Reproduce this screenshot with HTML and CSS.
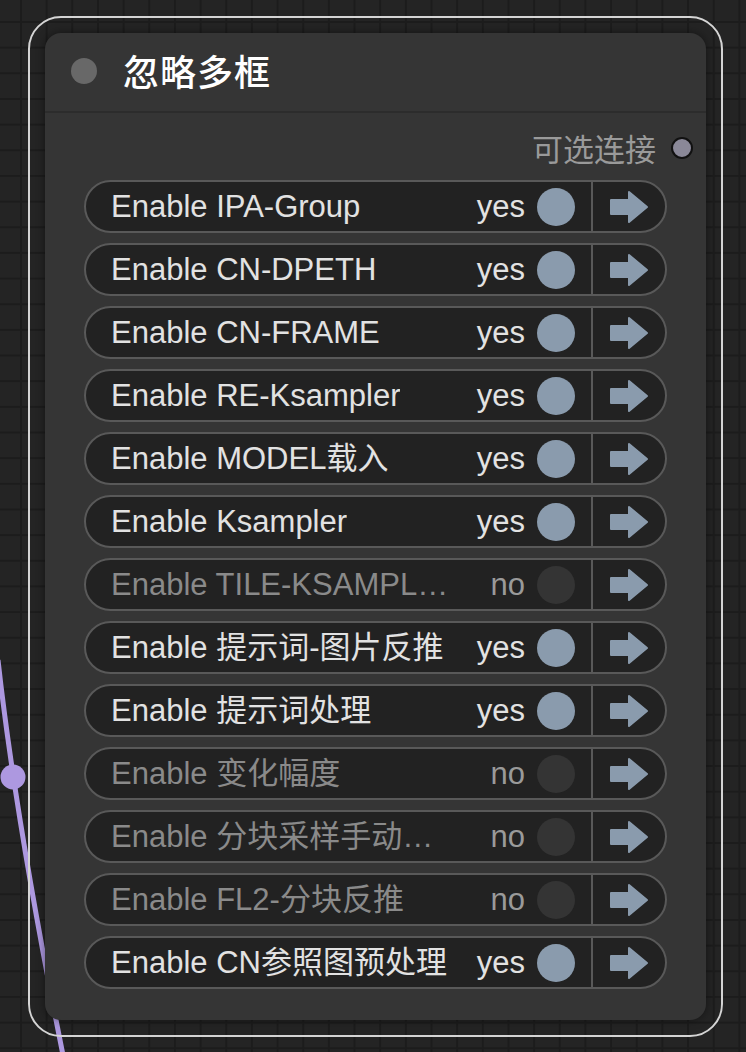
FILE: index.html
```html
<!DOCTYPE html>
<html lang="zh">
<head>
    <meta charset="UTF-8">
    <meta name="viewport" content="width=device-width, initial-scale=1.0">
    <title>忽略多框</title>
    <link rel="stylesheet" href="styles.css">
</head>
<body>
    <div class="canvas">
        <svg class="link" width="746" height="1052" viewBox="0 0 746 1052">
            <path d="M -2 660 Q 16 822 64 1060" fill="none" stroke="#ad98e0" stroke-width="5"/>
            <circle cx="13" cy="777" r="12.5" fill="#ad98e0"/>
        </svg>

        <div class="node">
            <div class="node-title">
                <span class="title-dot"></span>
                <span class="title-text">忽略多框</span>
            </div>

            <div class="node-body">
                <div class="slot-row">
                    <span class="slot-label">可选连接</span>
                    <span class="slot-dot"></span>
                </div>

                <div class="toggle-row">
                    <div class="toggle-main"><span class="label">Enable IPA-Group</span><span class="value">yes</span><span class="knob"></span></div>
                    <div class="toggle-nav"><svg width="40" height="34" viewBox="0 0 40 34"><path d="M2 10 H20 V2 L38 17 L20 32 V24 H2 Z" fill="#8a9bad" stroke="#8a9bad" stroke-width="2" stroke-linejoin="round"/></svg></div>
                </div>
                <div class="toggle-row">
                    <div class="toggle-main"><span class="label">Enable CN-DPETH</span><span class="value">yes</span><span class="knob"></span></div>
                    <div class="toggle-nav"><svg width="40" height="34" viewBox="0 0 40 34"><path d="M2 10 H20 V2 L38 17 L20 32 V24 H2 Z" fill="#8a9bad" stroke="#8a9bad" stroke-width="2" stroke-linejoin="round"/></svg></div>
                </div>
                <div class="toggle-row">
                    <div class="toggle-main"><span class="label">Enable CN-FRAME</span><span class="value">yes</span><span class="knob"></span></div>
                    <div class="toggle-nav"><svg width="40" height="34" viewBox="0 0 40 34"><path d="M2 10 H20 V2 L38 17 L20 32 V24 H2 Z" fill="#8a9bad" stroke="#8a9bad" stroke-width="2" stroke-linejoin="round"/></svg></div>
                </div>
                <div class="toggle-row">
                    <div class="toggle-main"><span class="label">Enable RE-Ksampler</span><span class="value">yes</span><span class="knob"></span></div>
                    <div class="toggle-nav"><svg width="40" height="34" viewBox="0 0 40 34"><path d="M2 10 H20 V2 L38 17 L20 32 V24 H2 Z" fill="#8a9bad" stroke="#8a9bad" stroke-width="2" stroke-linejoin="round"/></svg></div>
                </div>
                <div class="toggle-row">
                    <div class="toggle-main"><span class="label">Enable MODEL载入</span><span class="value">yes</span><span class="knob"></span></div>
                    <div class="toggle-nav"><svg width="40" height="34" viewBox="0 0 40 34"><path d="M2 10 H20 V2 L38 17 L20 32 V24 H2 Z" fill="#8a9bad" stroke="#8a9bad" stroke-width="2" stroke-linejoin="round"/></svg></div>
                </div>
                <div class="toggle-row">
                    <div class="toggle-main"><span class="label">Enable Ksampler</span><span class="value">yes</span><span class="knob"></span></div>
                    <div class="toggle-nav"><svg width="40" height="34" viewBox="0 0 40 34"><path d="M2 10 H20 V2 L38 17 L20 32 V24 H2 Z" fill="#8a9bad" stroke="#8a9bad" stroke-width="2" stroke-linejoin="round"/></svg></div>
                </div>
                <div class="toggle-row off">
                    <div class="toggle-main"><span class="label">Enable TILE-KSAMPL…</span><span class="value">no</span><span class="knob"></span></div>
                    <div class="toggle-nav"><svg width="40" height="34" viewBox="0 0 40 34"><path d="M2 10 H20 V2 L38 17 L20 32 V24 H2 Z" fill="#8a9bad" stroke="#8a9bad" stroke-width="2" stroke-linejoin="round"/></svg></div>
                </div>
                <div class="toggle-row">
                    <div class="toggle-main"><span class="label">Enable 提示词-图片反推</span><span class="value">yes</span><span class="knob"></span></div>
                    <div class="toggle-nav"><svg width="40" height="34" viewBox="0 0 40 34"><path d="M2 10 H20 V2 L38 17 L20 32 V24 H2 Z" fill="#8a9bad" stroke="#8a9bad" stroke-width="2" stroke-linejoin="round"/></svg></div>
                </div>
                <div class="toggle-row">
                    <div class="toggle-main"><span class="label">Enable 提示词处理</span><span class="value">yes</span><span class="knob"></span></div>
                    <div class="toggle-nav"><svg width="40" height="34" viewBox="0 0 40 34"><path d="M2 10 H20 V2 L38 17 L20 32 V24 H2 Z" fill="#8a9bad" stroke="#8a9bad" stroke-width="2" stroke-linejoin="round"/></svg></div>
                </div>
                <div class="toggle-row off">
                    <div class="toggle-main"><span class="label">Enable 变化幅度</span><span class="value">no</span><span class="knob"></span></div>
                    <div class="toggle-nav"><svg width="40" height="34" viewBox="0 0 40 34"><path d="M2 10 H20 V2 L38 17 L20 32 V24 H2 Z" fill="#8a9bad" stroke="#8a9bad" stroke-width="2" stroke-linejoin="round"/></svg></div>
                </div>
                <div class="toggle-row off">
                    <div class="toggle-main"><span class="label">Enable 分块采样手动…</span><span class="value">no</span><span class="knob"></span></div>
                    <div class="toggle-nav"><svg width="40" height="34" viewBox="0 0 40 34"><path d="M2 10 H20 V2 L38 17 L20 32 V24 H2 Z" fill="#8a9bad" stroke="#8a9bad" stroke-width="2" stroke-linejoin="round"/></svg></div>
                </div>
                <div class="toggle-row off">
                    <div class="toggle-main"><span class="label">Enable FL2-分块反推</span><span class="value">no</span><span class="knob"></span></div>
                    <div class="toggle-nav"><svg width="40" height="34" viewBox="0 0 40 34"><path d="M2 10 H20 V2 L38 17 L20 32 V24 H2 Z" fill="#8a9bad" stroke="#8a9bad" stroke-width="2" stroke-linejoin="round"/></svg></div>
                </div>
                <div class="toggle-row">
                    <div class="toggle-main"><span class="label">Enable CN参照图预处理</span><span class="value">yes</span><span class="knob"></span></div>
                    <div class="toggle-nav"><svg width="40" height="34" viewBox="0 0 40 34"><path d="M2 10 H20 V2 L38 17 L20 32 V24 H2 Z" fill="#8a9bad" stroke="#8a9bad" stroke-width="2" stroke-linejoin="round"/></svg></div>
                </div>
            </div>
        </div>
    </div>
</body>
</html>
```

FILE: styles.css
```css
body {
    margin: 0;
    font-family: "Liberation Sans", "Noto Sans CJK SC", sans-serif;
    background-color: #232323;
}

.canvas {
    position: relative;
    width: 746px;
    height: 1052px;
    overflow: hidden;
    box-sizing: border-box;
    padding: 33px 0 0 45px;
    background-color: #242424;
    background-image:
        linear-gradient(#1c1c1c 2px, transparent 2px),
        linear-gradient(90deg, #1c1c1c 2px, transparent 2px);
    background-size: 25.67px 25.67px;
    background-position: 20px 21px;
}

/* link wire drawn on the canvas, under the node */
.link {
    position: absolute;
    left: 0;
    top: 0;
    z-index: 0;
}

.node {
    position: relative;
    z-index: 1;
    width: 661px;
    height: 987px;
    background: #353535;
    border-radius: 16px;
    box-shadow: 0 0 10px rgba(0, 0, 0, 0.45);
    outline: 2px solid #d4d4d4;
    outline-offset: 15px;
}

.node-title {
    display: flex;
    align-items: center;
    height: 78px;
    padding-left: 26px;
    border-bottom: 2px solid #2c2c2c;
}

.title-dot {
    width: 26px;
    height: 26px;
    border-radius: 50%;
    background: #686868;
    margin-top: -2px;
}

.title-text {
    margin-left: 26px;
    font-family: "Noto Sans CJK SC", sans-serif;
    font-size: 36px;
    font-weight: 500;
    line-height: 40px;
    color: #fff;
    letter-spacing: 1px;
    margin-top: -4px;
}

.node-body {
    padding: 0 39px 31px 39px;
}

.slot-row {
    display: flex;
    align-items: center;
    justify-content: flex-end;
    height: 60px;
    padding-top: 7px;
    margin-right: -26px;
}

.slot-label {
    font-family: "Noto Sans CJK SC", sans-serif;
    font-size: 31px;
    line-height: 36px;
    color: #9a9a9a;
    margin-top: -4px;
}

.slot-dot {
    width: 18px;
    height: 18px;
    border-radius: 50%;
    background: #8a8898;
    border: 2px solid #111;
    margin-left: 15px;
    margin-top: -4px;
}

.toggle-row {
    display: flex;
    height: 49px;
    border: 2px solid #595959;
    border-radius: 27px;
    background: #222;
    margin-bottom: 10px;
    overflow: hidden;
}

.toggle-row:last-child {
    margin-bottom: 0;
}

.toggle-main {
    flex: 1;
    display: flex;
    align-items: center;
    padding: 0 16px 0 25px;
    min-width: 0;
}

.label {
    max-width: 350px;
    white-space: nowrap;
    overflow: hidden;
    text-overflow: ellipsis;
    font-size: 31px;
    line-height: 38px;
    color: #e2e2e2;
}

.value {
    margin-left: auto;
    font-size: 31px;
    line-height: 38px;
    color: #e2e2e2;
}

.knob {
    width: 38px;
    height: 38px;
    border-radius: 50%;
    background: #8a9bad;
    margin-left: 12px;
}

.toggle-row.off .label {
    color: #8a8a8a;
}

.toggle-row.off .value {
    color: #9a9a9a;
}

.toggle-row.off .knob {
    background: #343434;
}

.toggle-nav {
    width: 72px;
    border-left: 2px solid #595959;
    display: flex;
    align-items: center;
    justify-content: center;
}
```
